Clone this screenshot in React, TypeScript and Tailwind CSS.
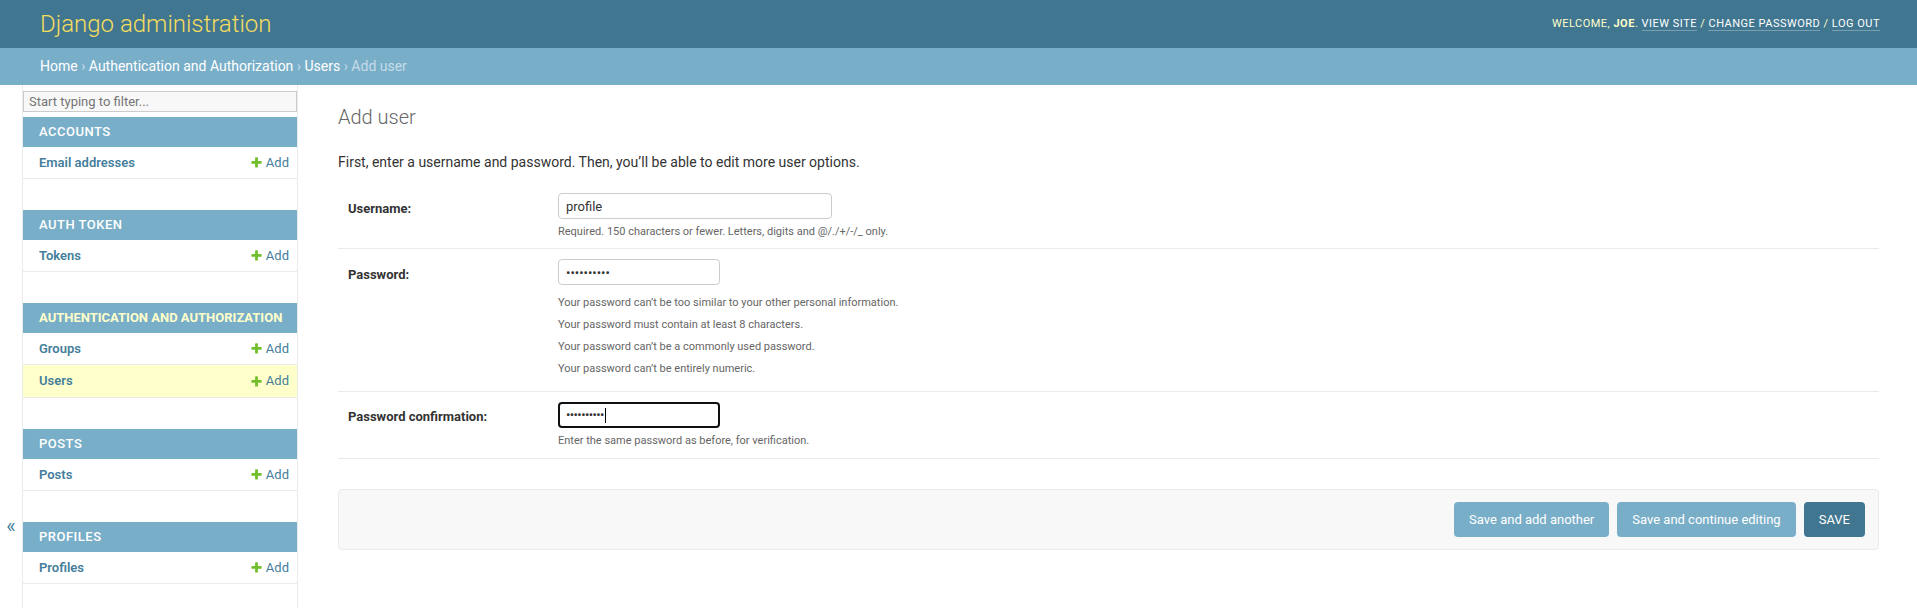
import React from "react";

type Model = { name: string; current?: boolean };
type Section = { title: string; current?: boolean; models: Model[] };

const sections: Section[] = [
  { title: "Accounts", models: [{ name: "Email addresses" }] },
  { title: "Auth Token", models: [{ name: "Tokens" }] },
  {
    title: "Authentication and Authorization",
    current: true,
    models: [{ name: "Groups" }, { name: "Users", current: true }],
  },
  { title: "Posts", models: [{ name: "Posts" }] },
  { title: "Profiles", models: [{ name: "Profiles" }] },
];

function AddIcon() {
  return (
    <svg width="13" height="13" viewBox="0 0 1792 1792" aria-hidden="true">
      <path
        fill="#70bf2b"
        d="M1600 796v192q0 40-28 68t-68 28h-416v416q0 40-28 68t-68 28h-192q-40 0-68-28t-28-68v-416h-416q-40 0-68-28t-28-68v-192q0-40 28-68t68-28h416v-416q0-40 28-68t68-28h192q40 0 68 28t28 68v416h416q40 0 68 28t28 68z"
      />
    </svg>
  );
}

function Sidebar() {
  return (
    <nav className="w-[275px] shrink-0 border-r border-[#eaeaea]">
      <input
        placeholder="Start typing to filter..."
        className="mt-[6px] mb-[5px] block h-[21px] w-full border border-[#ccc] bg-[#f8f8f8] px-[5px] text-[13px] text-[#333] placeholder:text-[#757575] outline-none"
      />
      {sections.map((s) => (
        <div key={s.title} className="mb-[31px]">
          <div
            className={`flex h-[30px] items-center whitespace-nowrap bg-[#79aec8] pl-[16px] text-[13px] uppercase ${
              s.current ? "font-bold tracking-normal text-[#ffc]" : "font-medium tracking-[0.5px] text-white"
            }`}
          >
            {s.title}
          </div>
          {s.models.map((m) => (
            <div
              key={m.name}
              className={`flex items-center justify-between border-b border-[#eaeaea] pl-[16px] pr-[8px] text-[13px] ${
                m.current ? "h-[33px] bg-[#ffc]" : "h-[32px] bg-white"
              }`}
            >
              <a className="font-semibold text-[#447e9b]">{m.name}</a>
              <a className="flex items-center gap-[3px] text-[#447e9b]">
                <AddIcon />
                Add
              </a>
            </div>
          ))}
        </div>
      ))}
    </nav>
  );
}

function Help({ children }: { children: React.ReactNode }) {
  return <div className="mt-[5px] text-[11px] leading-[16px] text-[#666]">{children}</div>;
}

export default function App() {
  return (
    <div className="flex min-h-screen flex-col bg-white font-['Roboto','Liberation_Sans',sans-serif] text-[#333]">
      <header className="flex h-[48px] items-center justify-between bg-[#417690] pl-[40px] pr-[37px]">
        <h1 className="text-[24px] font-light leading-[28px] text-[#f5dd5d]">Django administration</h1>
        <div className="text-[11px] uppercase leading-[14px] tracking-[0.5px] text-[#ffc]">
          Welcome, <strong className="font-bold">joe</strong>.{" "}
          <a className="border-b border-white/30 text-white">View site</a> /{" "}
          <a className="border-b border-white/30 text-white">Change password</a> /{" "}
          <a className="border-b border-white/30 text-white">Log out</a>
        </div>
      </header>

      <div className="flex h-[37px] items-center bg-[#79aec8] px-[40px] text-[14px] text-[#c4dce8]">
        <a className="text-white">Home</a>&nbsp;›&nbsp;
        <a className="text-white">Authentication and Authorization</a>&nbsp;›&nbsp;
        <a className="text-white">Users</a>&nbsp;›&nbsp;Add user
      </div>

      <div className="flex flex-1">
        <div className="flex w-[23px] shrink-0 flex-col items-center border-r border-[#eaeaea] pt-[431px]">
          <span className="text-[20px] leading-[20px] text-[#447e9b]">«</span>
        </div>
        <Sidebar />

        <main className="flex-1 pt-[20px] pl-[40px] pr-[38px]">
          <h1 className="text-[20px] font-light leading-[24px] text-[#666]">Add user</h1>
          <p className="mt-[23px] mb-[11px] text-[14px] leading-[20px] text-[#333]">
            First, enter a username and password. Then, you’ll be able to edit more user options.
          </p>

          <div className="flex border-b border-[#eaeaea] pt-[10px] pb-[8px] pl-[10px] text-[13px]">
            <label className="w-[210px] shrink-0 pt-[8px] leading-[16px] font-bold text-[#333]">Username:</label>
            <div className="flex flex-col">
              <input
                readOnly
                value="profile"
                className="h-[26px] w-[274px] rounded-[4px] border border-[#ccc] px-[7px] text-[13px] text-[#333] outline-none"
              />
              <Help>Required. 150 characters or fewer. Letters, digits and @/./+/-/_ only.</Help>
            </div>
          </div>

          <div className="flex border-b border-[#eaeaea] pt-[10px] pb-[11px] pl-[10px] text-[13px]">
            <label className="w-[210px] shrink-0 pt-[8px] leading-[16px] font-bold text-[#333]">Password:</label>
            <div className="flex flex-col">
              <input
                readOnly
                type="password"
                value="abcdefghij"
                className="h-[26px] w-[162px] rounded-[4px] border border-[#ccc] px-[7px] text-[13px] text-[#333] outline-none"
              />
              <ul className="mt-[7px] text-[11px] text-[#666]">
                <li className="flex h-[22px] items-center">Your password can’t be too similar to your other personal information.</li>
                <li className="flex h-[22px] items-center">Your password must contain at least 8 characters.</li>
                <li className="flex h-[22px] items-center">Your password can’t be a commonly used password.</li>
                <li className="flex h-[22px] items-center">Your password can’t be entirely numeric.</li>
              </ul>
            </div>
          </div>

          <div className="flex border-b border-[#eaeaea] pt-[10px] pb-[9px] pl-[10px] text-[13px]">
            <label className="w-[210px] shrink-0 pt-[7px] leading-[16px] font-bold text-[#333]">
              Password confirmation:
            </label>
            <div className="flex flex-col">
              <div className="flex h-[26px] w-[162px] items-center rounded-[4px] border-2 border-[#101010] px-[6px] text-[13px] text-[#333]">
                <span className="tracking-[-0.6px]">••••••••••</span>
                <span className="ml-[1px] h-[15px] w-[1px] bg-black" />
              </div>
              <Help>Enter the same password as before, for verification.</Help>
            </div>
          </div>

          <div className="mt-[30px] flex justify-end gap-[8px] rounded-[4px] border border-[#eaeaea] bg-[#f8f8f8] px-[13px] py-[12px]">
            <button className="h-[35px] rounded-[4px] bg-[#79aec8] px-[15px] text-[13px] text-white">
              Save and add another
            </button>
            <button className="h-[35px] rounded-[4px] bg-[#79aec8] px-[15px] text-[13px] text-white">
              Save and continue editing
            </button>
            <button className="h-[35px] rounded-[4px] bg-[#417690] px-[15px] text-[13px] text-white">SAVE</button>
          </div>
        </main>
      </div>
    </div>
  );
}
